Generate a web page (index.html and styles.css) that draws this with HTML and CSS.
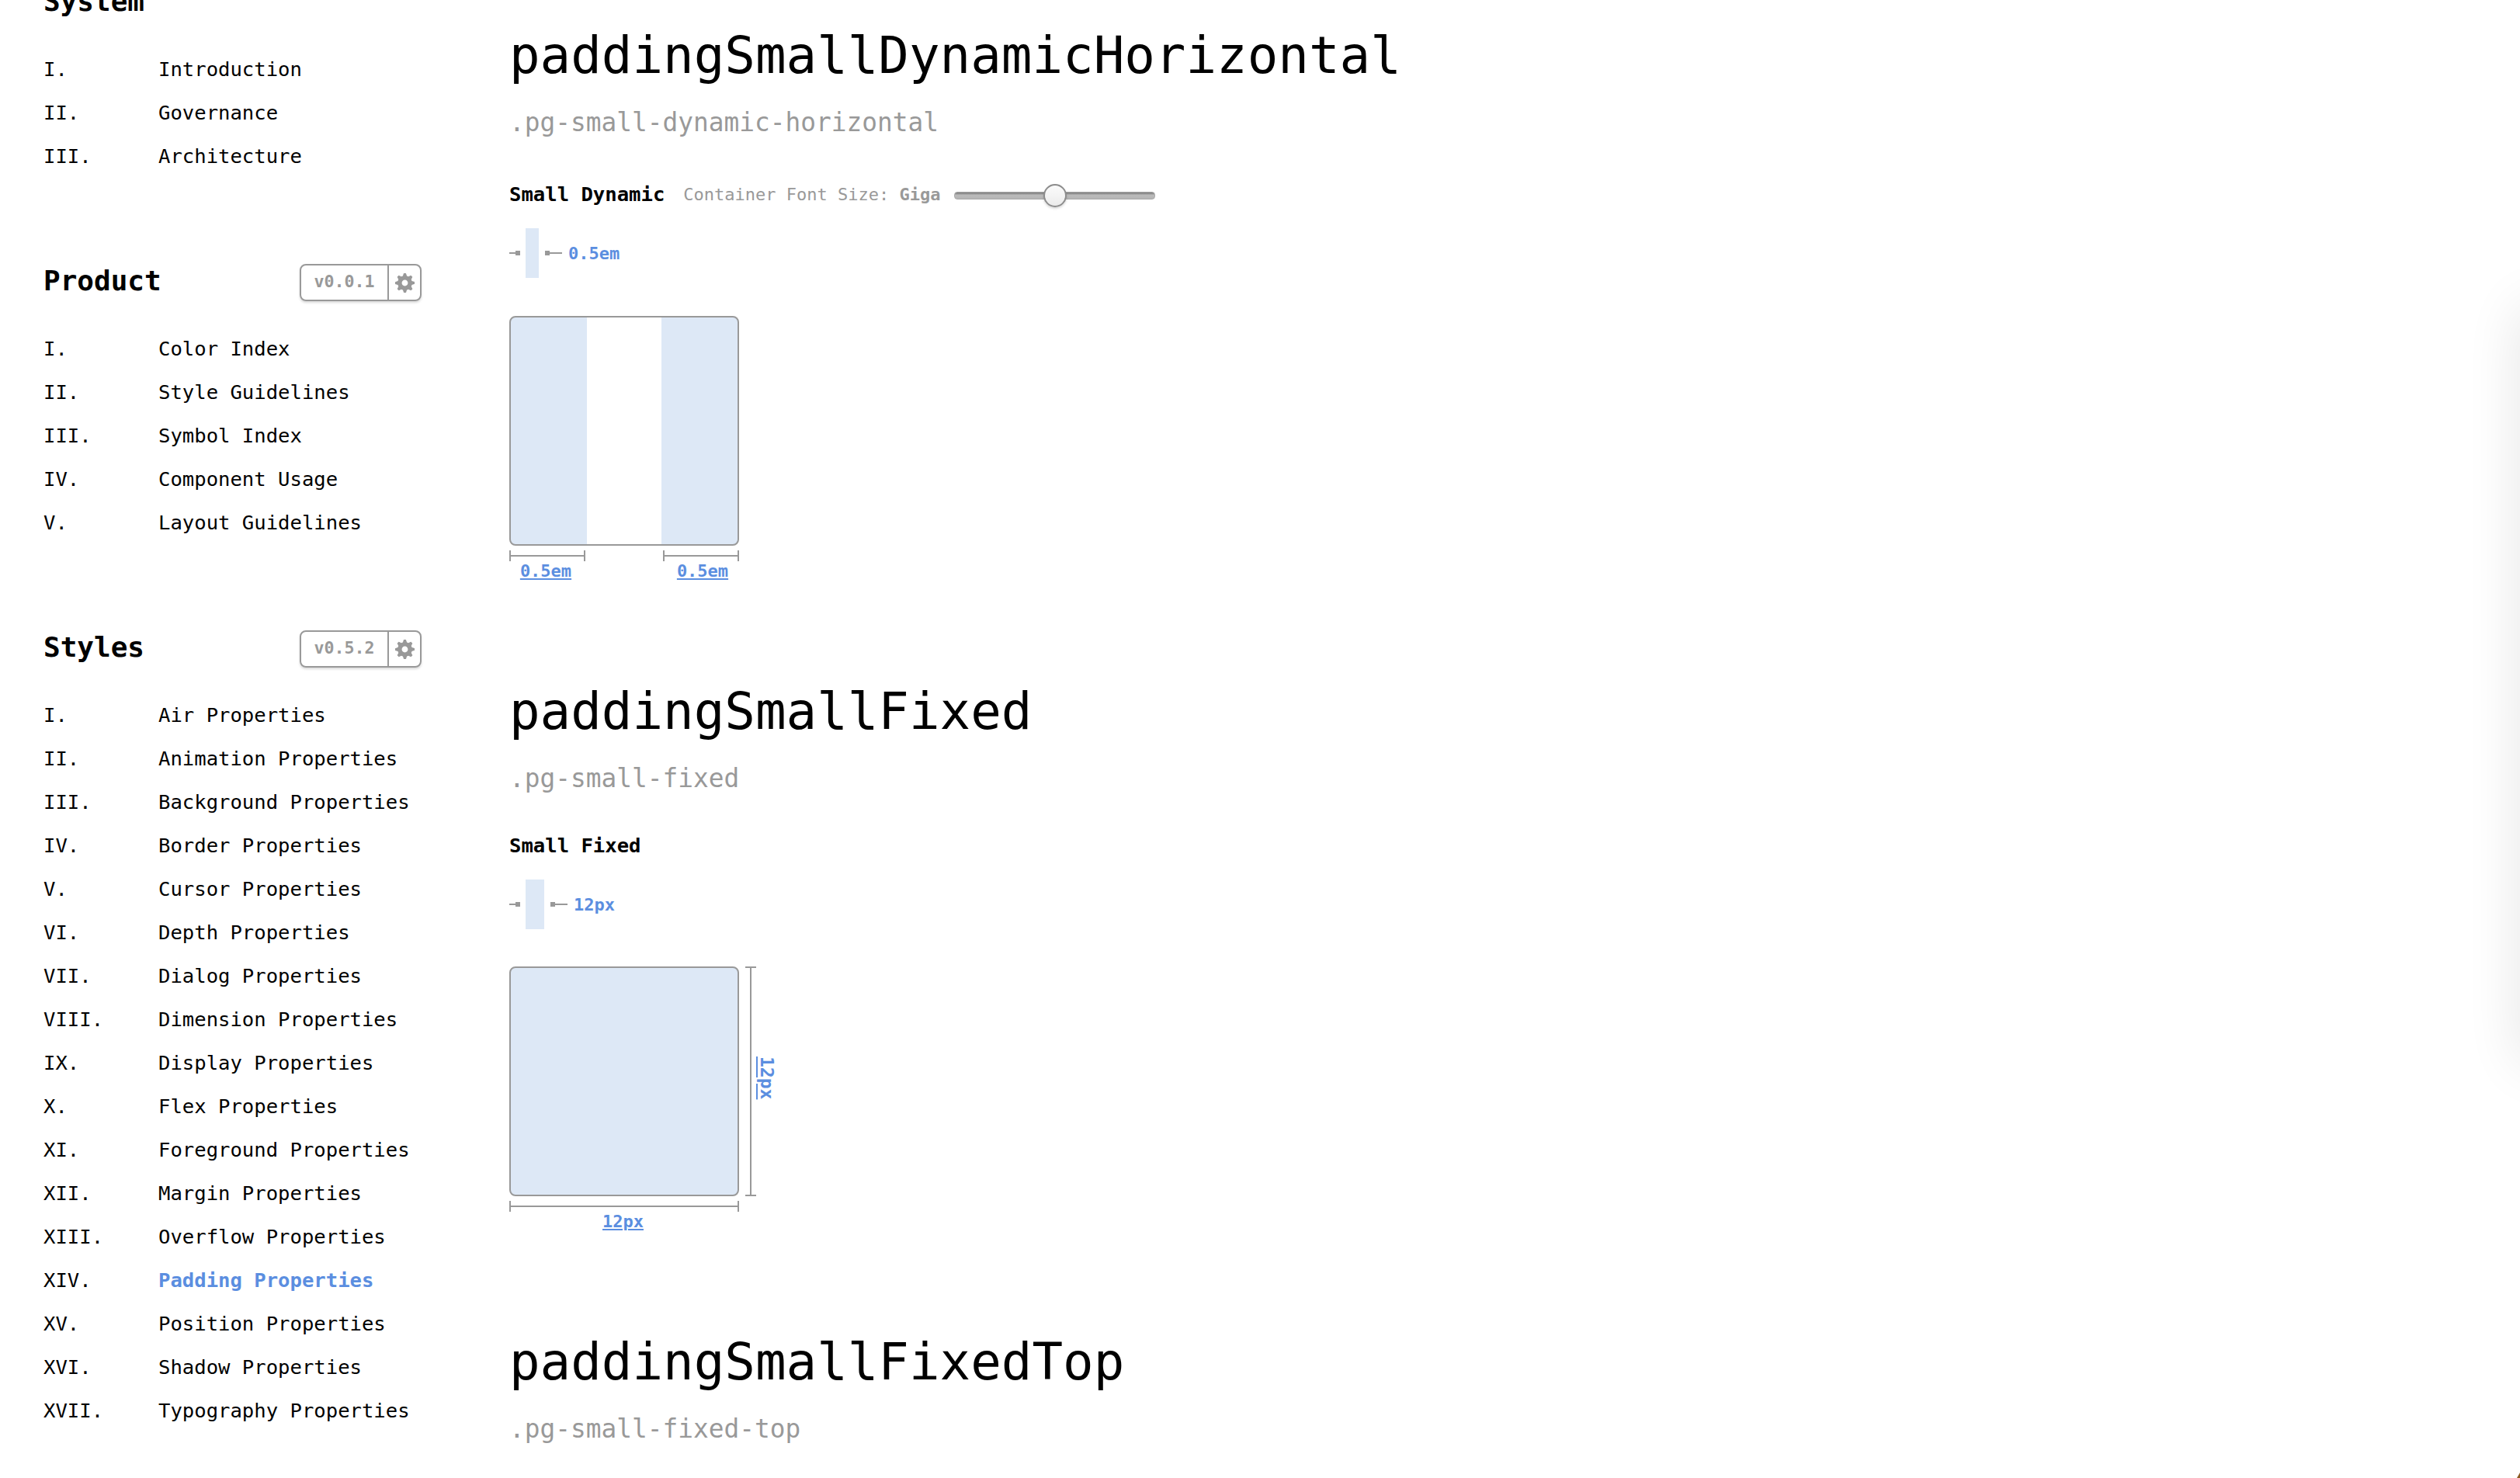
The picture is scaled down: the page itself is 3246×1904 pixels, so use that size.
FILE: index.html
```html
<!DOCTYPE html>
<html lang="en">
<head>
    <meta charset="UTF-8">
    <title>Padding Properties</title>
    <link rel="stylesheet" href="styles.css">
</head>
<body>
    <div class="page">
        <nav class="sidebar">
            <div class="group">
                <div class="group-head"><h2>System</h2></div>
                <ul class="toc">
                    <li><span class="num">I.</span><a href="#">Introduction</a></li>
                    <li><span class="num">II.</span><a href="#">Governance</a></li>
                    <li><span class="num">III.</span><a href="#">Architecture</a></li>
                </ul>
            </div>
            <div class="group">
                <div class="group-head">
                    <h2>Product</h2>
                    <div class="version">
                        <span class="version-num">v0.0.1</span>
                        <span class="version-gear">
                            <svg viewBox="0 1 14 14" width="25" height="25"><path fill-rule="evenodd" d="M14 8.77v-1.6l-1.94-.64-.45-1.09.88-1.84-1.13-1.13-1.81.91-1.09-.45-.69-1.92h-1.6l-.63 1.94-1.11.45-1.84-.88-1.13 1.13.91 1.81-.45 1.09L0 7.23v1.59l1.94.64.45 1.09-.88 1.84 1.13 1.13 1.81-.91 1.09.45.69 1.92h1.59l.63-1.94 1.11-.45 1.84.88 1.13-1.13-.92-1.81.47-1.09L14 8.75v.02zM7 10.2c-1.22 0-2.2-.98-2.2-2.2s.98-2.2 2.2-2.2 2.2.98 2.2 2.2-.98 2.2-2.2 2.2z"/></svg>
                        </span>
                    </div>
                </div>
                <ul class="toc">
                    <li><span class="num">I.</span><a href="#">Color Index</a></li>
                    <li><span class="num">II.</span><a href="#">Style Guidelines</a></li>
                    <li><span class="num">III.</span><a href="#">Symbol Index</a></li>
                    <li><span class="num">IV.</span><a href="#">Component Usage</a></li>
                    <li><span class="num">V.</span><a href="#">Layout Guidelines</a></li>
                </ul>
            </div>
            <div class="group">
                <div class="group-head">
                    <h2>Styles</h2>
                    <div class="version">
                        <span class="version-num">v0.5.2</span>
                        <span class="version-gear">
                            <svg viewBox="0 1 14 14" width="25" height="25"><path fill-rule="evenodd" d="M14 8.77v-1.6l-1.94-.64-.45-1.09.88-1.84-1.13-1.13-1.81.91-1.09-.45-.69-1.92h-1.6l-.63 1.94-1.11.45-1.84-.88-1.13 1.13.91 1.81-.45 1.09L0 7.23v1.59l1.94.64.45 1.09-.88 1.84 1.13 1.13 1.81-.91 1.09.45.69 1.92h1.59l.63-1.94 1.11-.45 1.84.88 1.13-1.13-.92-1.81.47-1.09L14 8.75v.02zM7 10.2c-1.22 0-2.2-.98-2.2-2.2s.98-2.2 2.2-2.2 2.2.98 2.2 2.2-.98 2.2-2.2 2.2z"/></svg>
                        </span>
                    </div>
                </div>
                <ul class="toc">
                    <li><span class="num">I.</span><a href="#">Air Properties</a></li>
                    <li><span class="num">II.</span><a href="#">Animation Properties</a></li>
                    <li><span class="num">III.</span><a href="#">Background Properties</a></li>
                    <li><span class="num">IV.</span><a href="#">Border Properties</a></li>
                    <li><span class="num">V.</span><a href="#">Cursor Properties</a></li>
                    <li><span class="num">VI.</span><a href="#">Depth Properties</a></li>
                    <li><span class="num">VII.</span><a href="#">Dialog Properties</a></li>
                    <li><span class="num">VIII.</span><a href="#">Dimension Properties</a></li>
                    <li><span class="num">IX.</span><a href="#">Display Properties</a></li>
                    <li><span class="num">X.</span><a href="#">Flex Properties</a></li>
                    <li><span class="num">XI.</span><a href="#">Foreground Properties</a></li>
                    <li><span class="num">XII.</span><a href="#">Margin Properties</a></li>
                    <li><span class="num">XIII.</span><a href="#">Overflow Properties</a></li>
                    <li class="active"><span class="num">XIV.</span><a href="#">Padding Properties</a></li>
                    <li><span class="num">XV.</span><a href="#">Position Properties</a></li>
                    <li><span class="num">XVI.</span><a href="#">Shadow Properties</a></li>
                    <li><span class="num">XVII.</span><a href="#">Typography Properties</a></li>
                </ul>
            </div>
        </nav>

        <main class="content">
            <section class="entry">
                <h1>paddingSmallDynamicHorizontal</h1>
                <p class="class-name">.pg-small-dynamic-horizontal</p>
                <div class="label-row label-row-control">
                    <h3>Small Dynamic</h3>
                    <span class="hint">Container Font Size: <b>Giga</b></span>
                    <input class="size-slider" type="range" min="0" max="100" value="50">
                </div>
                <div class="spec">
                    <span class="arrow arrow-in"></span>
                    <span class="spec-bar spec-bar-dynamic"></span>
                    <span class="arrow arrow-out"></span>
                    <span class="spec-value">0.5em</span>
                </div>
                <div class="demo demo-horizontal">
                    <div class="box"><div class="box-inner"></div></div>
                </div>
                <div class="rulers rulers-split">
                    <div class="ruler-h ruler-half"><span class="ruler-line"></span><a href="#">0.5em</a></div>
                    <div class="ruler-h ruler-half"><span class="ruler-line"></span><a href="#">0.5em</a></div>
                </div>
            </section>

            <section class="entry">
                <h1>paddingSmallFixed</h1>
                <p class="class-name">.pg-small-fixed</p>
                <div class="label-row">
                    <h3>Small Fixed</h3>
                </div>
                <div class="spec">
                    <span class="arrow arrow-in"></span>
                    <span class="spec-bar spec-bar-fixed"></span>
                    <span class="arrow arrow-out"></span>
                    <span class="spec-value">12px</span>
                </div>
                <div class="demo">
                    <div class="box box-full"></div>
                    <div class="ruler-v">
                        <span class="ruler-line"></span>
                        <a href="#">12px</a>
                    </div>
                </div>
                <div class="rulers">
                    <div class="ruler-h ruler-full"><span class="ruler-line"></span><a href="#">12px</a></div>
                </div>
            </section>

            <section class="entry">
                <h1>paddingSmallFixedTop</h1>
                <p class="class-name">.pg-small-fixed-top</p>
            </section>
        </main>
    </div>
    <div class="side-shadow"></div>
    <div class="corner-mark"></div>
</body>
</html>
```
FILE: styles.css
```css
html, body {
    height: 100%;
}

body {
    background-color: #fff;
    color: #000;
    font-family: "DejaVu Sans Mono", monospace;
    margin: 0;
    overflow: hidden;
}

a {
    color: inherit;
    text-decoration: none;
}

.page {
    display: flex;
}

/* sidebar */
.sidebar {
    box-sizing: border-box;
    flex: 0 0 656px;
    margin-top: -22px;
    padding-left: 56px;
}

.group {
    margin-bottom: 109px;
    width: 487px;
}

.group-head {
    align-items: center;
    display: flex;
    height: 48px;
    justify-content: space-between;
    margin-bottom: 35px;
}

.group-head h2 {
    font-size: 36px;
    font-weight: bold;
    margin: 0 0 2px;
}

.version {
    border: 2px solid #999;
    border-radius: 8px;
    box-shadow: 0 2px 3px rgba(0, 0, 0, 0.15);
    box-sizing: border-box;
    color: #999;
    display: flex;
    font-size: 21.6px;
    font-weight: bold;
    height: 48px;
    position: relative;
    top: 2px;
    width: 157px;
}

.version-num {
    align-items: center;
    border-right: 2px solid #999;
    display: flex;
    flex: 1;
    justify-content: center;
    padding-bottom: 4px;
}

.version-gear {
    align-items: center;
    display: flex;
    flex: 0 0 40px;
    justify-content: center;
}

.version-gear svg {
    fill: #999;
}

.toc {
    list-style: none;
    margin: 0;
    padding: 0;
}

.toc li {
    align-items: center;
    display: flex;
    font-size: 25.6px;
    height: 56px;
}

.toc .num {
    flex: 0 0 148px;
}

.toc .active a {
    color: #5b8ee0;
    font-weight: bold;
}

/* main column */
.content {
    flex: 1;
    padding-top: 32px;
}

.entry {
    margin-bottom: 128px;
}

.entry h1 {
    font-size: 65.8px;
    font-weight: normal;
    line-height: 80px;
    margin: 0 0 26px;
}

.class-name {
    color: #999;
    font-size: 32.8px;
    line-height: 40px;
    margin: 0 0 50px;
}

.label-row {
    align-items: center;
    display: flex;
    gap: 24px;
    height: 32px;
}

.label-row-control {
    margin-top: 56px;
}

.label-row h3 {
    font-size: 25.6px;
    font-weight: bold;
    margin: 0;
}

.hint {
    color: #999;
    font-size: 22px;
}

.size-slider {
    appearance: none;
    -webkit-appearance: none;
    background: none;
    height: 32px;
    margin: 3px 0 0 -6px;
    width: 259px;
}

.size-slider::-webkit-slider-runnable-track {
    background: linear-gradient(#777, #bbb 45%, #b4b4b4);
    border: 1px solid #aaa;
    border-radius: 4px;
    box-sizing: border-box;
    height: 10px;
}

.size-slider::-webkit-slider-thumb {
    -webkit-appearance: none;
    background: linear-gradient(#fafafa, #f4f4f4 50%, #eaeaea);
    border: 2px solid #8c8c8c;
    border-radius: 50%;
    box-shadow: 0 2px 3px rgba(0, 0, 0, 0.15);
    box-sizing: border-box;
    height: 30px;
    margin-top: -11px;
    width: 30px;
}

.spec {
    align-items: center;
    display: flex;
    height: 64px;
    margin-top: 28px;
}

.spec-bar {
    align-self: stretch;
    background-color: #dde8f6;
}

.spec-bar-dynamic {
    margin: 0 8px 0 7px;
    width: 17px;
}

.spec-bar-fixed {
    margin: 0 8px 0 7px;
    width: 24px;
}

.arrow {
    background-color: #999;
    display: block;
    height: 2px;
    position: relative;
}

.arrow::after {
    background-color: #999;
    content: "";
    height: 6px;
    position: absolute;
    top: -2px;
    width: 6px;
}

.arrow-in {
    width: 14px;
}

.arrow-in::after {
    right: 0;
}

.arrow-out {
    width: 22px;
}

.arrow-out::after {
    left: 0;
}

.spec-value {
    color: #5b8ee0;
    font-size: 22px;
    font-weight: bold;
    margin-left: 8px;
}

.demo {
    display: flex;
    margin-top: 48px;
}

.demo-horizontal {
    margin-top: 49px;
}

.box {
    border: 2px solid #999;
    border-radius: 8px;
    box-sizing: border-box;
    height: 296px;
    overflow: hidden;
    width: 296px;
}

.demo-horizontal .box {
    background-color: #dde8f6;
    padding: 0 98px;
}

.box-inner {
    background-color: #fff;
    height: 100%;
}

.box-full {
    background-color: #dde8f6;
}

.ruler-v {
    align-items: center;
    display: flex;
    margin-left: 8px;
}

.ruler-v .ruler-line {
    border-bottom: 2px solid #999;
    border-top: 2px solid #999;
    box-sizing: border-box;
    height: 100%;
    position: relative;
    width: 14px;
}

.ruler-v .ruler-line::after {
    background-color: #999;
    bottom: 0;
    content: "";
    left: 6px;
    position: absolute;
    top: 0;
    width: 2px;
}

.ruler-v a {
    color: #5b8ee0;
    font-size: 23px;
    font-weight: bold;
    line-height: 24px;
    margin: 0 0 8px 2px;
    text-decoration: underline;
    writing-mode: vertical-rl;
}

.rulers {
    display: flex;
    height: 40px;
    margin-top: 6px;
    width: 296px;
}

.rulers-split {
    justify-content: space-between;
}

.ruler-h {
    color: #5b8ee0;
    font-size: 22px;
    font-weight: bold;
    text-align: center;
}

.ruler-half {
    width: 98px;
}

.ruler-half:first-child a {
    margin-right: 4px;
}

.ruler-half:last-child a {
    margin-left: 4px;
}

.ruler-full {
    width: 296px;
}

.ruler-h .ruler-line {
    border-left: 2px solid #999;
    border-right: 2px solid #999;
    box-sizing: border-box;
    display: block;
    height: 14px;
    position: relative;
}

.ruler-h .ruler-line::after {
    background-color: #999;
    content: "";
    height: 2px;
    left: 0;
    position: absolute;
    right: 0;
    top: 6px;
}

.ruler-h a {
    display: inline-block;
    line-height: 24px;
    text-decoration: underline;
}

.ruler-full a {
    margin-right: 3px;
}

/* drawer sticking out past the right edge, only its shadow shows */
.side-shadow {
    border-radius: 40px;
    box-shadow: 0 0 70px rgba(0, 0, 0, 0.11);
    height: 985px;
    position: fixed;
    right: -60px;
    top: 390px;
    width: 60px;
}

.corner-mark {
    border-bottom: 7px solid #8a5a20;
    border-left: 4px solid transparent;
    bottom: 0;
    position: fixed;
    right: 0;
}
```
